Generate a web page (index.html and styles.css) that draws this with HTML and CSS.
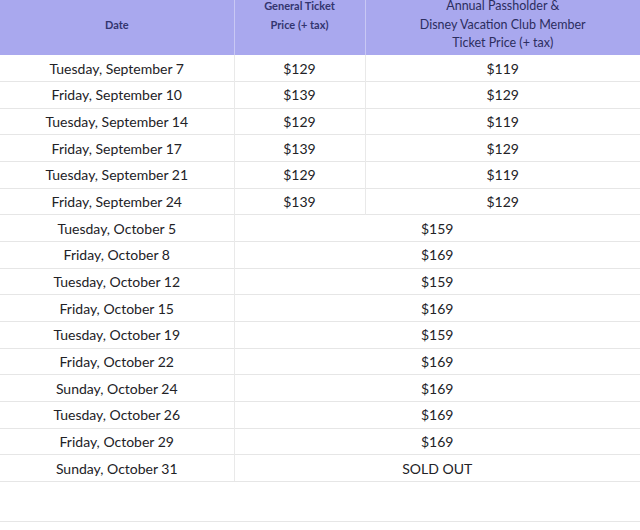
FILE: index.html
```html
<!DOCTYPE html>
<html>
<head>
<meta charset="utf-8">
<link rel="stylesheet" href="styles.css">
</head>
<body>
<div class="wrap">
<table class="prices">
  <colgroup>
    <col class="c1"><col class="c2"><col class="c3">
  </colgroup>
  <thead>
    <tr>
      <th class="h-date">Date</th>
      <th class="h-gen">General Ticket<br>Price (+ tax)</th>
      <th class="h-ap">Annual Passholder &amp;<br>Disney Vacation Club Member<br>Ticket Price (+ tax)</th>
    </tr>
  </thead>
  <tbody>
    <tr><td>Tuesday, September 7</td><td>$129</td><td>$119</td></tr>
    <tr><td>Friday, September 10</td><td>$139</td><td>$129</td></tr>
    <tr><td>Tuesday, September 14</td><td>$129</td><td>$119</td></tr>
    <tr><td>Friday, September 17</td><td>$139</td><td>$129</td></tr>
    <tr><td>Tuesday, September 21</td><td>$129</td><td>$119</td></tr>
    <tr><td>Friday, September 24</td><td>$139</td><td>$129</td></tr>
    <tr><td>Tuesday, October 5</td><td colspan="2">$159</td></tr>
    <tr><td>Friday, October 8</td><td colspan="2">$169</td></tr>
    <tr><td>Tuesday, October 12</td><td colspan="2">$159</td></tr>
    <tr><td>Friday, October 15</td><td colspan="2">$169</td></tr>
    <tr><td>Tuesday, October 19</td><td colspan="2">$159</td></tr>
    <tr><td>Friday, October 22</td><td colspan="2">$169</td></tr>
    <tr><td>Sunday, October 24</td><td colspan="2">$169</td></tr>
    <tr><td>Tuesday, October 26</td><td colspan="2">$169</td></tr>
    <tr><td>Friday, October 29</td><td colspan="2">$169</td></tr>
    <tr><td>Sunday, October 31</td><td colspan="2">SOLD OUT</td></tr>
  </tbody>
</table>
<div class="spacer"></div>
</div>
</body>
</html>
```
FILE: styles.css
```css
html, body {
  margin: 0;
  padding: 0;
  background: #ffffff;
}
.wrap {
  margin-top: -5px;
  width: 640px;
}
.prices {
  width: 640px;
  border-collapse: collapse;
  table-layout: fixed;
  font-family: "Lato", "Liberation Sans", sans-serif;
}
.c1 { width: 234px; }
.c2 { width: 131px; }
.c3 { width: 275px; }
.prices th {
  background: #a9a8ee;
  height: 60px;
  padding: 2px 0 0 0;
  box-sizing: border-box;
  vertical-align: top;
  line-height: 18.5px;
  font-weight: 400;
  font-size: 12.5px;
  color: #2c2d5e;
  border-left: 1.5px solid #c9c8f4;
}
.prices th:first-child { border-left: none; }
.prices .h-date {
  vertical-align: middle;
  padding: 0;
}
.prices .h-date, .prices .h-gen {
  font-weight: 700;
  font-size: 11px;
  color: #33356f;
}
.prices td {
  height: 26.67px;
  padding: 0;
  text-align: center;
  font-size: 14px;
  color: #222226;
  border-top: 1px solid #e6e6e6;
  border-left: 1.5px solid #e9e9e9;
  box-sizing: border-box;
}
.prices tbody tr:first-child td { border-top: none; }
.prices tbody tr:last-child td { border-bottom: 1px solid #e6e6e6; }
.prices td:first-child { border-left: none; }
.spacer {
  height: 39px;
  border-bottom: 1.5px solid #e6e6e6;
}
```
